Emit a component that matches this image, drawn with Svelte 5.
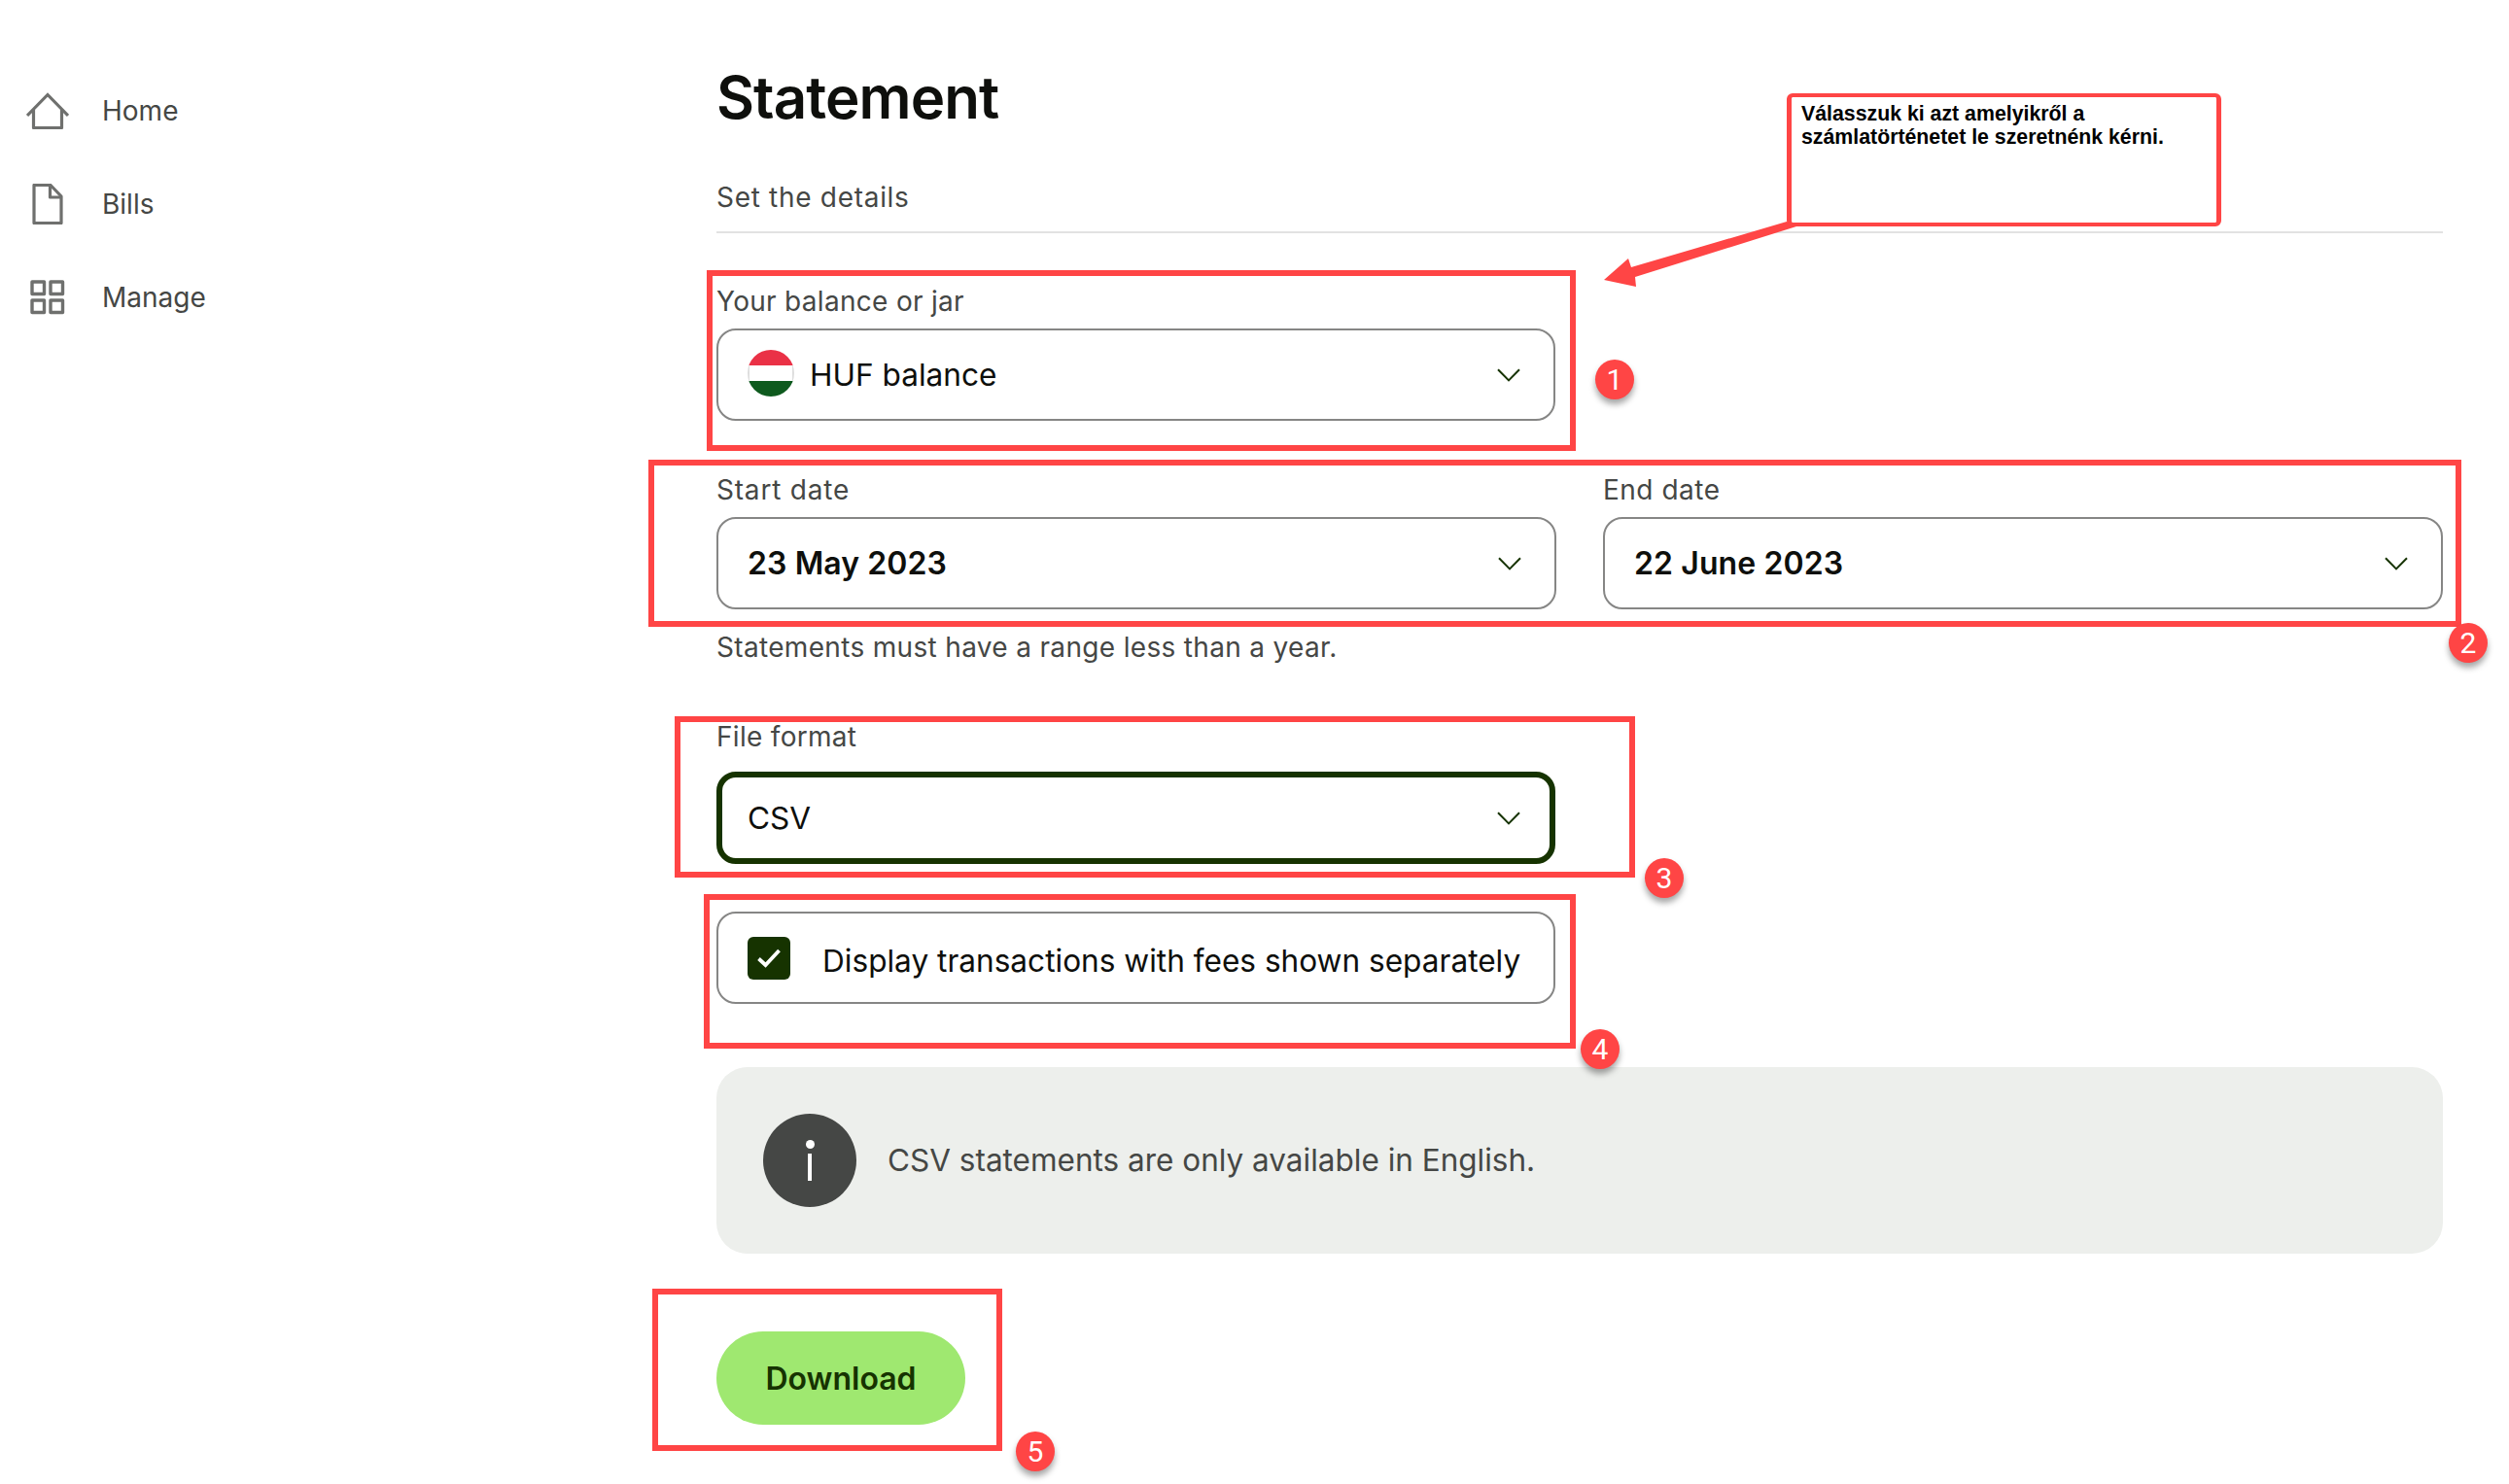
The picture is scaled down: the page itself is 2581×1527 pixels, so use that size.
<script>
  const nav = [
    { label: 'Home', icon: 'home' },
    { label: 'Bills', icon: 'bill' },
    { label: 'Manage', icon: 'grid' }
  ];
  const frames = [
    { cls: 'f1' }, { cls: 'f2' }, { cls: 'f3' }, { cls: 'f4' }, { cls: 'f5' }
  ];
  const badges = [
    { n: 1, cls: 'b1' }, { n: 2, cls: 'b2' }, { n: 3, cls: 'b3' }, { n: 4, cls: 'b4' }, { n: 5, cls: 'b5' }
  ];
</script>

{#snippet chevron()}
  <svg class="chev" width="24" height="14" viewBox="0 0 24 14" fill="none"><path d="M1 1.2 12 12.4 23 1.2" stroke="#163300" stroke-width="2"/></svg>
{/snippet}

<div class="page">
  <nav class="side">
    {#each nav as item}
      <a class="nav-item" href="#{item.label}">
        <span class="nav-icon">
          {#if item.icon === 'home'}
            <svg width="44" height="38" viewBox="0 0 44 38" fill="none" stroke="#6f706e" stroke-width="3.2"><path d="M1 24 22 2.5 43 24" /><path d="M7.5 18V36.5H36.5V18" stroke-linejoin="round"/></svg>
          {:else if item.icon === 'bill'}
            <svg width="32" height="42" viewBox="0 0 32 42" fill="none" stroke="#6f706e" stroke-width="3.2" stroke-linejoin="round"><path d="M2 1.5H19L30 13V40.5H2Z"/><path d="M18.5 2V14H30"/></svg>
          {:else}
            <svg width="36" height="36" viewBox="0 0 36 36" fill="none" stroke="#6f706e" stroke-width="3.4" stroke-linejoin="round"><rect x="2" y="2" width="12.5" height="12.5"/><rect x="21" y="2" width="12.5" height="12.5"/><rect x="2" y="21" width="12.5" height="12.5"/><rect x="21" y="21" width="12.5" height="12.5"/></svg>
          {/if}
        </span>
        <span>{item.label}</span>
      </a>
    {/each}
  </nav>

  <main class="main">
    <h1>Statement</h1>
    <h2>Set the details</h2>

    <div class="field f-balance">
      <span class="label">Your balance or jar</span>
      <div class="select">
        <span class="flag"><i class="red"></i><i class="white"></i><i class="green"></i></span>
        <span class="val">HUF balance</span>
        {@render chevron()}
      </div>
    </div>

    <div class="dates">
      <div class="field">
        <span class="label">Start date</span>
        <div class="select"><span class="val strong">23 May 2023</span>{@render chevron()}</div>
      </div>
      <div class="field">
        <span class="label">End date</span>
        <div class="select"><span class="val strong">22 June 2023</span>{@render chevron()}</div>
      </div>
    </div>
    <p class="hint">Statements must have a range less than a year.</p>

    <div class="field f-format">
      <span class="label">File format</span>
      <div class="select focused"><span class="val">CSV</span>{@render chevron()}</div>
    </div>

    <div class="select check-row">
      <span class="check">
        <svg width="26" height="22" viewBox="0 0 26 22" fill="none"><path d="M2.5 11.5 9.5 18 23.5 3" stroke="#fff" stroke-width="3.8"/></svg>
      </span>
      <span class="val">Display transactions with fees shown separately</span>
    </div>

    <div class="info">
      <span class="info-icon"><i class="dot"></i><i class="stem"></i></span>
      <span>CSV statements are only available in English.</span>
    </div>

    <button class="download">Download</button>
  </main>

  {#each frames as f}
    <div class="frame {f.cls}"></div>
  {/each}
  {#each badges as b}
    <div class="badge {b.cls}">{b.n}</div>
  {/each}

  <div class="callout">Válasszuk ki azt amelyikről a<br />számlatörténetet le szeretnénk kérni.</div>
  <svg class="arrow" width="220" height="80" viewBox="1640 225 220 80">
    <path d="M1650 288 1675 266 1678 275 1838 228 1848 233 1682 285 1683 295Z" fill="#ff4545"/>
  </svg>
</div>

<style>
  :global(body) {
    margin: 0;
    background: #fff;
  }
  .page {
    position: relative;
    width: 2581px;
    height: 1527px;
    display: flex;
    overflow: hidden;
    font-family: Inter, "Liberation Sans", sans-serif;
    color: #454745;
    font-size: 28px;
    line-height: 36px;
  }
  .side {
    width: 737px;
    flex: none;
    padding-top: 66px;
    box-sizing: border-box;
  }
  .nav-item {
    height: 96px;
    display: flex;
    align-items: center;
    color: #454745;
    text-decoration: none;
  }
  .nav-icon {
    width: 105px;
    padding-left: 27px;
    box-sizing: border-box;
    display: flex;
    justify-content: flex-start;
  }
  .nav-item:nth-child(2) .nav-icon { padding-left: 33px; }
  .nav-item:nth-child(3) .nav-icon { padding-left: 31px; }
  .main {
    width: 1776px;
    flex: none;
    display: flex;
    flex-direction: column;
    padding-top: 64px;
  }
  h1 {
    margin: 0;
    font-size: 60px;
    line-height: 72px;
    font-weight: 600;
    color: #0e0f0c;
    letter-spacing: -0.9px;
  }
  h2 {
    margin: 49px 0 0;
    padding-bottom: 17px;
    border-bottom: 2px solid #e2e2e2;
    font-size: 28px;
    line-height: 36px;
    font-weight: 400;
    letter-spacing: 0.7px;
    color: #454745;
  }
  .field {
    display: flex;
    flex-direction: column;
    gap: 10px;
    width: 863px;
    flex: none;
  }
  .f-balance { margin-top: 52px; }
  .label { display: block; letter-spacing: 0.3px; }
  .dates .field { width: 864px; }
  .dates .field:first-child .label { letter-spacing: 0.8px; }
  .dates .field:last-child .label { letter-spacing: 0.5px; }
  .select {
    height: 95px;
    box-sizing: border-box;
    border: 2px solid #868685;
    border-radius: 20px;
    display: flex;
    align-items: center;
    padding: 0 30px;
    font-size: 31.6px;
    color: #0e0f0c;
    background: #fff;
  }
  .val { flex: 1; white-space: nowrap; }
  .strong { font-weight: 600; font-size: 32px; letter-spacing: 0.1px; }
  .flag {
    width: 48px;
    height: 48px;
    border-radius: 50%;
    overflow: hidden;
    display: flex;
    flex-direction: column;
    margin-right: 16px;
    margin-top: -3px;
    flex: none;
  }
  .flag i { flex: 1; display: block; }
  .red { background: #ea3146; }
  .white { background: #fff; box-shadow: inset 2px 0 #ddd, inset -2px 0 #ddd; }
  .green { background: #0e5a1e; }
  .chev { flex: none; margin-right: 4px; }
  .dates {
    display: flex;
    justify-content: space-between;
    margin-top: 53px;
  }
  .hint { margin: 21px 0 0; letter-spacing: 0.33px; }
  .f-format { margin-top: 56px; gap: 18px; }
  .focused { border: 6px solid #163300; padding: 0 26px; }
  .check-row {
    width: 863px;
    margin-top: 49px;
    flex: none;
  }
  .check-row .val { padding-top: 6px; }
  .check {
    width: 44px;
    height: 44px;
    border-radius: 6px;
    background: #163300;
    display: flex;
    align-items: center;
    justify-content: center;
    margin-right: 33px;
    flex: none;
  }
  .info {
    margin-top: 65px;
    height: 192px;
    background: #edefec;
    border-radius: 32px;
    display: flex;
    align-items: center;
    gap: 32px;
    padding-left: 48px;
    font-size: 31.5px;
    flex: none;
  }
  .info-icon {
    width: 96px;
    height: 96px;
    border-radius: 50%;
    background: #454745;
    display: flex;
    flex-direction: column;
    align-items: center;
    justify-content: flex-start;
    padding-top: 27px;
    box-sizing: border-box;
  }
  .dot { width: 9px; height: 9px; border-radius: 50%; background: #fff; }
  .stem { width: 4px; height: 28px; background: #fff; margin-top: 5px; }
  .download {
    margin-top: 80px;
    width: 256px;
    height: 96px;
    border: none;
    border-radius: 48px;
    background: #9fe870;
    color: #163300;
    font-family: inherit;
    font-size: 32px;
    font-weight: 600;
    flex: none;
  }
  .frame {
    position: absolute;
    box-sizing: border-box;
    border: 6px solid #ff4545;
  }
  .f1 { left: 727px; top: 278px; width: 894px; height: 186px; }
  .f2 { left: 667px; top: 473px; width: 1865px; height: 172px; }
  .f3 { left: 694px; top: 737px; width: 988px; height: 166px; }
  .f4 { left: 724px; top: 920px; width: 897px; height: 159px; }
  .f5 { left: 671px; top: 1326px; width: 360px; height: 167px; }
  .badge {
    position: absolute;
    width: 40px;
    height: 41px;
    border-radius: 50%;
    background: #ff4545;
    color: #fff;
    font-family: Roboto, "Liberation Sans", sans-serif;
    font-size: 30px;
    line-height: 41px;
    text-align: center;
    box-shadow: 0 5px 6px rgba(0, 0, 0, 0.35);
  }
  .b1 { left: 1641px; top: 370px; }
  .b2 { left: 2519px; top: 641px; }
  .b3 { left: 1692px; top: 883px; }
  .b4 { left: 1626px; top: 1059px; }
  .b5 { left: 1045px; top: 1473px; }
  .callout {
    position: absolute;
    left: 1838px;
    top: 96px;
    width: 447px;
    height: 137px;
    box-sizing: border-box;
    border: 4px solid #ff4545;
    border-left-width: 5px;
    border-right-width: 5px;
    border-radius: 6px;
    background: #fff;
    padding: 5px 10px;
    font-family: "Liberation Sans", Arial, sans-serif;
    font-size: 21.3px;
    line-height: 24px;
    font-weight: 700;
    color: #000;
  }
  .arrow { position: absolute; left: 1640px; top: 225px; }
</style>
